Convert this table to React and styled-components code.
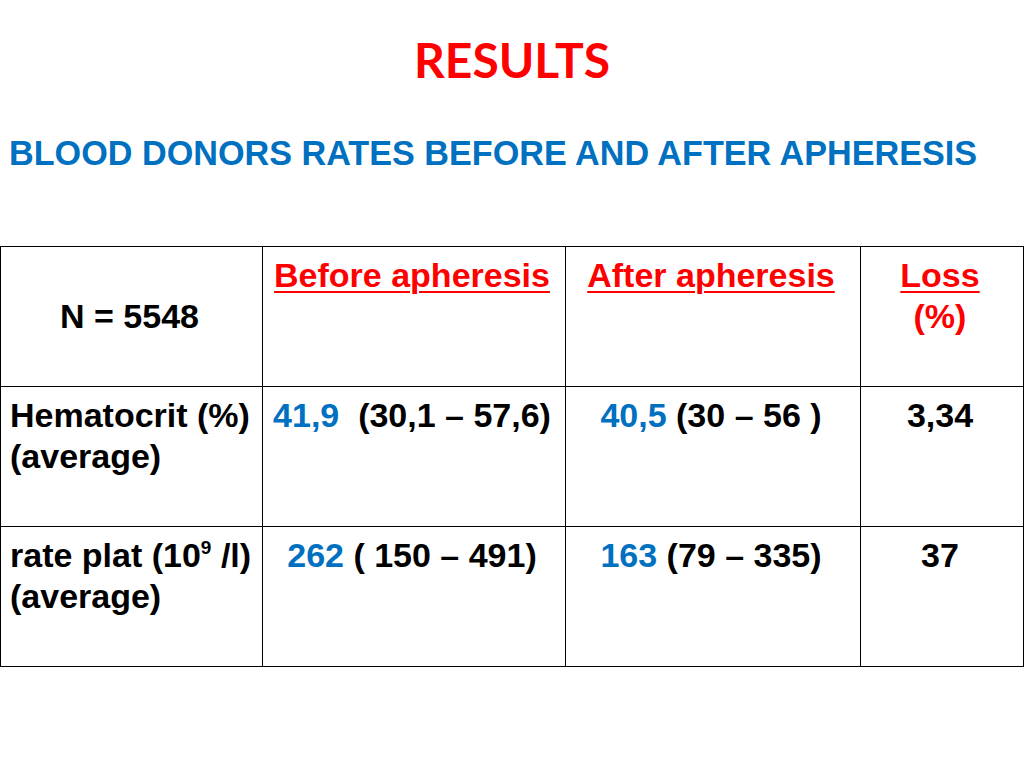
import React from "react";
import styled, { createGlobalStyle } from "styled-components";

const Global = createGlobalStyle`
  html, body { margin: 0; padding: 0; background: #fff; }
  body { font-family: "Liberation Sans", Arial, sans-serif; }
`;

const Slide = styled.div`
  width: 1024px;
  height: 768px;
  background: #fff;
  display: flex;
  flex-direction: column;
  overflow: hidden;
`;

const Title = styled.h1`
  margin: 35px 0 0;
  font-family: Lato, "Open Sans", sans-serif;
  font-weight: 700;
  font-size: 48px;
  line-height: 50px;
  color: #ff0000;
  text-align: center;
`;

const Subtitle = styled.h2`
  margin: 51px 0 0 9px;
  font-family: "Liberation Sans", Arial, sans-serif;
  font-weight: 700;
  font-size: 34.2px;
  line-height: 34px;
  color: #0070c0;
  white-space: nowrap;
`;

const Table = styled.table`
  margin-top: 76px;
  width: 1023px;
  border-collapse: collapse;
  table-layout: fixed;
  font-family: "Liberation Sans", Arial, sans-serif;
  font-weight: 700;
  font-size: 34px;
  line-height: 41px;
  color: #000;
`;

const Col = styled.col`
  width: ${(p) => p.$w}px;
`;

const Row = styled.tr`
  height: 140px;
`;

const Cell = styled.td`
  border: 1px solid #000;
  padding: 8px 8px 0 ${(p) => (p.$left ? 9 : 4)}px;
  vertical-align: ${(p) => (p.$middle ? "middle" : "top")};
  text-align: ${(p) => (p.$left ? "left" : "center")};
  white-space: pre;
  ${(p) => (p.$middle ? "padding-top: 0;" : "")}
`;

const Head = styled.span`
  color: #ff0000;
  text-decoration: ${(p) => (p.$plain ? "none" : "underline")};
  text-decoration-thickness: 2px;
  text-underline-offset: 4px;
`;

const Num = styled.span`
  color: #0070c0;
`;

const Sup = styled.sup`
  font-size: 19px;
  line-height: 0;
  vertical-align: 13px;
`;

export default function App() {
  return (
    <>
      <Global />
      <Slide>
        <Title>RESULTS</Title>
        <Subtitle>BLOOD DONORS RATES BEFORE AND AFTER APHERESIS</Subtitle>
        <Table>
          <colgroup>
            <Col $w={262} />
            <Col $w={303} />
            <Col $w={295} />
            <Col $w={163} />
          </colgroup>
          <tbody>
            <Row>
              <Cell $middle>N = 5548</Cell>
              <Cell>
                <Head>Before apheresis</Head>
              </Cell>
              <Cell>
                <Head>After apheresis</Head>
              </Cell>
              <Cell>
                <Head>Loss</Head>
                {"\n"}
                <Head $plain>(%)</Head>
              </Cell>
            </Row>
            <Row>
              <Cell $left>{"Hematocrit (%)\n(average)"}</Cell>
              <Cell>
                <Num>41,9</Num>
                {"  (30,1 – 57,6)"}
              </Cell>
              <Cell>
                <Num>40,5</Num>
                {" (30 – 56 )"}
              </Cell>
              <Cell>3,34</Cell>
            </Row>
            <Row>
              <Cell $left>
                {"rate plat (10"}
                <Sup>9</Sup>
                {" /l)\n(average)"}
              </Cell>
              <Cell>
                <Num>262</Num>
                {" ( 150 – 491)"}
              </Cell>
              <Cell>
                <Num>163</Num>
                {" (79 – 335)"}
              </Cell>
              <Cell>37</Cell>
            </Row>
          </tbody>
        </Table>
      </Slide>
    </>
  );
}
